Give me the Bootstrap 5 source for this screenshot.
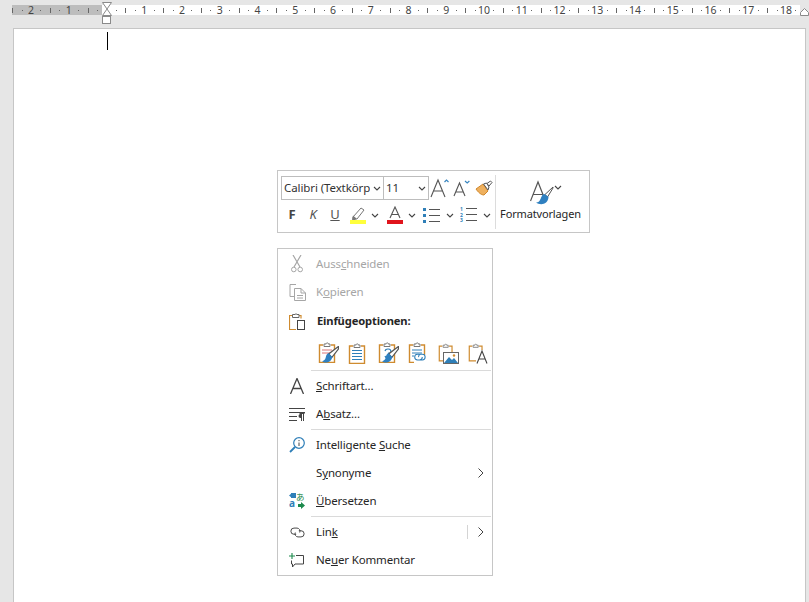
<!DOCTYPE html>
<html lang="de">
<head>
    <meta charset="UTF-8">
    <meta name="viewport" content="width=device-width, initial-scale=1.0">
    <title>Kontextmenü</title>
    <link href="https://cdn.jsdelivr.net/npm/bootstrap@5.3.0/dist/css/bootstrap.min.css" rel="stylesheet">
    <style>
        html, body { height: 100%; overflow: hidden; }
        body { background: #e6e6e6; font-family: "Noto Sans", "Liberation Sans", sans-serif; font-size: 11.5px; letter-spacing: -.15px; color: #262626; }
        .ruler-wrap { height: 28px; position: relative; }
        .ruler-svg { position: absolute; left: 0; top: 0; letter-spacing: 0; }
        .doc-page { position: absolute; left: 13px; top: 28px; width: 793px; height: 600px; background: #fff; border: 1px solid #c6c6c6; }
        .text-cursor { width: 1px; height: 18px; background: #000; margin: 3px 0 0 93px; }
        .mini-bar { position: absolute; left: 277px; top: 170px; width: 313px; height: 63px; background: #fff; border: 1px solid #c6c6c6; padding: 5px 3px 4px; }
        .bar-col { width: 214px; flex: 0 0 214px; }
        .combo { height: 24px; border: 1px solid #bdbdbd; padding-left: 2px; line-height: 21px; overflow: hidden; white-space: nowrap; color: #333; flex: 0 0 auto; font-size: 11.5px; letter-spacing: -.1px; }
        .combo-font { width: 103px; }
        .combo-size { width: 46px; margin-left: -1px; }
        .combo-clip { overflow: hidden; flex: 1 1 auto; }
        .bar-row2 { height: 28px; margin-top: 1px; }
        .cell { display: flex; align-items: center; justify-content: center; flex: 0 0 auto; }
        .bar-sep { width: 1px; height: 54px; background: #dcdcdc; margin: -1px 0 0 0; }
        .style-col { width: 92px; line-height: 14px; }
        .style-icon { height: 30px; align-self: flex-start; margin-left: 34px; }
        .style-label { font-size: 11px; margin: 1px 1px 0 0; color: #262626; }
        .ctx-menu { position: absolute; left: 277px; top: 248px; width: 216px; height: 328px; background: #fff; border: 1px solid #c6c6c6; padding-top: 1px; }
        .ctx-row { height: 28px; display: flex; align-items: center; position: relative; }
        .ctx-ico { width: 38px; flex: 0 0 38px; display: flex; align-items: center; justify-content: center; }
        .ctx-off { color: #a6a6a6; }
        .ctx-headrow { margin-top: 1px; }
        .ctx-head { font-weight: 700; font-size: 11.2px; margin: 1px 0 0 1px; }
        .paste-row { height: 35px; display: flex; padding-left: 35px; align-items: center; }
        .paste-cell { width: 30px; flex: 0 0 30px; display: flex; justify-content: center; }
        .ctx-sep { height: 1px; background: #dadada; margin-left: 33px; margin-right: 1px; }
        .ctx-sep + .ctx-row { margin-top: 1px; }
        .sep-tight { margin-top: 1px; }
        .sub-arrow { position: absolute; right: 8px; top: 9px; }
        .sub-line { position: absolute; right: 24px; top: 7px; width: 1px; height: 14px; background: #d4d4d4; }
        u { text-underline-offset: 1px; }
        .ico-text { font-family: "Noto Sans", "Noto Sans CJK JP", sans-serif; letter-spacing: 0; }
    </style>
</head>
<body>
    <svg width="0" height="0" class="position-absolute">
        <symbol id="chev" viewBox="0 0 8 5"><path d="M1 1l3 3 3-3" fill="none" stroke="#444" stroke-width="1.100"/></symbol>
        <symbol id="clip" viewBox="0 0 20 22">
            <path d="M5 4H1.500v17.500h15V4H13" fill="#fff" stroke="#cf8b2f" stroke-width="1.400"/>
            <path d="M6 5.500V3h2.200a1 1 0 0 1 1.600-1 1 1 0 0 1 .4 1H12v2.500z" fill="#fff" stroke="#777" stroke-width="1"/>
        </symbol>
        <symbol id="brush" viewBox="0 0 14 14">
            <path d="M13.500.5L5.500 6.500 8 9.500l5.500-7z" fill="#fff" stroke="#555" stroke-width="1"/>
            <path d="M5.500 6C3 6.500 3.500 9.500 2.500 11 1.800 12 1 12.500 0 12.500c2.500 2 7.500 1.500 8.500-3.500z" fill="#2f80c0"/>
        </symbol>
    </svg>

    <div class="ruler-wrap">
        <svg class="ruler-svg" id="ruler" width="809" height="28" font-family="Noto Sans, sans-serif" font-size="10.500" fill="#444"></svg>
    </div>
    <div class="doc-page"><div class="text-cursor"></div></div>

    <div class="mini-bar d-flex">
        <div class="bar-col">
            <div class="d-flex align-items-center">
                <div class="combo combo-font d-flex">
                    <span class="combo-clip">Calibri (Textkörp</span>
                    <span class="cell" style="width:13px"><svg width="8" height="5"><use href="#chev"/></svg></span>
                </div>
                <div class="combo combo-size d-flex">
                    <span class="combo-clip">11</span>
                    <span class="cell" style="width:13px"><svg width="8" height="5"><use href="#chev"/></svg></span>
                </div>
                <div class="cell" style="width:22px">
                    <svg width="20" height="20" viewBox="0 0 20 20"><path d="M1 19L8 2l7 17M3.500 13h9" fill="none" stroke="#555" stroke-width="1.100"/><path d="M14.500 4l2-2 2 2" fill="none" stroke="#3a86c0" stroke-width="1.200"/></svg>
                </div>
                <div class="cell" style="width:22px">
                    <svg width="18" height="18" viewBox="0 0 18 18"><path d="M1 17L6.500 4 12 17M2.800 13h7.400" fill="none" stroke="#555" stroke-width="1.100"/><path d="M12 2l2.200 2 2.200-2" fill="none" stroke="#3a86c0" stroke-width="1.200"/></svg>
                </div>
                <div class="cell" style="width:22px">
                    <svg width="18" height="16" viewBox="0 0 18 16"><path d="M1 9l7-5 5 7-4 4C6 15 3 12 1 9z" fill="#eeb05e" stroke="#d0872c"/><path d="M8.500 4l3-1 2.500 4-1 3z" fill="#fff" stroke="#555"/><path d="M12 3.500L15.500 1l1.500 1.500-3 3.500z" fill="#fff" stroke="#555"/></svg>
                </div>
            </div>
            <div class="d-flex align-items-center bar-row2">
                <div class="cell fw-bold" style="width:22px;font-size:13px;color:#444">F</div>
                <div class="cell fst-italic" style="width:20px;font-size:13px;color:#555">K</div>
                <div class="cell" style="width:24px;font-size:13px;color:#555;text-decoration:underline">U</div>
                <div class="cell" style="width:22px">
                    <svg width="16" height="18" viewBox="0 0 16 18"><path d="M3 11L11 2l3 2-7 9H3z" fill="#fff" stroke="#777"/><path d="M3 9.500l3.500 3L5 14H2z" fill="#777"/><rect y="14" width="16" height="4" fill="#ffff3c"/></svg>
                </div>
                <div class="cell" style="width:12px"><svg width="8" height="5"><use href="#chev"/></svg></div>
                <div class="cell" style="width:27px">
                    <svg width="16" height="18" viewBox="0 0 16 18"><path d="M3 12L8 1l5 11M4.600 8.500h6.800" fill="none" stroke="#555" stroke-width="1.100"/><rect y="14" width="16" height="4" fill="#e0141c"/></svg>
                </div>
                <div class="cell" style="width:8px"><svg width="8" height="5"><use href="#chev"/></svg></div>
                <div class="cell" style="width:30px">
                    <svg width="17" height="17" viewBox="0 0 17 17"><g fill="#2f7fb8"><rect y="1" width="3" height="3"/><rect y="7" width="3" height="3"/><rect y="13" width="3" height="3"/></g><path d="M6 2.500h11M6 8.500h11M6 14.500h11" stroke="#555"/></svg>
                </div>
                <div class="cell" style="width:8px"><svg width="8" height="5"><use href="#chev"/></svg></div>
                <div class="cell" style="width:29px">
                    <svg width="17" height="18" viewBox="0 0 17 18"><g class="ico-text" font-size="5" font-weight="700" fill="#2f7fb8"><text x="0" y="5">1</text><text x="0" y="10.500">2</text><text x="0" y="16">3</text></g><path d="M6 2.500h11M6 8.500h11M6 14.500h11" stroke="#555"/></svg>
                </div>
                <div class="cell" style="width:8px"><svg width="8" height="5"><use href="#chev"/></svg></div>
            </div>
        </div>
        <div class="bar-sep"></div>
        <div class="style-col d-flex flex-column align-items-center">
            <div class="d-flex align-items-end style-icon">
                <svg width="24" height="26" viewBox="0 0 24 26"><path d="M.5 21L8 2l7.500 19M3 14.500h10" fill="none" stroke="#555" stroke-width="1.200"/><path d="M23 7l-8 7.500 2.500 2.500 5.500-9z" fill="#fff" stroke="#555"/><path d="M14.500 14c-3.500.5-3 5-5.500 7.500-1 .8-2 1-3 1 4 3 12 2.500 12.500-5.500z" fill="#2f80c0"/></svg>
                <svg class="mb-3" width="8" height="5"><use href="#chev"/></svg>
            </div>
            <div class="style-label">Formatvorlagen</div>
        </div>
    </div>

    <div class="ctx-menu">
        <div class="ctx-row ctx-off">
            <div class="ctx-ico"><svg width="12" height="18" viewBox="0 0 12 18"><path d="M2 0l7 12M10 0L3 12" fill="none" stroke="#a6a6a6" stroke-width="1.200"/><circle cx="2.800" cy="14.500" r="2.300" fill="none" stroke="#a6a6a6"/><circle cx="9.200" cy="14.500" r="2.300" fill="none" stroke="#a6a6a6"/></svg></div>
            <span>Auss<u>c</u>hneiden</span>
        </div>
        <div class="ctx-row ctx-off">
            <div class="ctx-ico"><svg width="17" height="17" viewBox="0 0 17 17"><path d="M7 .5H1v12h4" fill="none" stroke="#a6a6a6"/><path d="M5.500 4.500H12L16.500 9v7.500h-11z" fill="#fff" stroke="#a6a6a6"/><path d="M12 4.500V9h4.500M8 11.500h6M8 14h6" fill="none" stroke="#a6a6a6"/></svg></div>
            <span>K<u>o</u>pieren</span>
        </div>
        <div class="ctx-row ctx-headrow">
            <div class="ctx-ico"><svg width="16" height="17" viewBox="0 0 16 17"><path d="M4 2.500H.5v14H7" fill="none" stroke="#cf8b2f" stroke-width="1.200"/><path d="M10 2.500h2v3" fill="none" stroke="#cf8b2f" stroke-width="1.200"/><path d="M3.500 4.500v-3H6a1.200 1.200 0 0 1 2 0h2v3z" fill="#fff" stroke="#666"/><rect x="8.500" y="7.500" width="7" height="9" fill="#fff" stroke="#444"/></svg></div>
            <span class="ctx-head">Einfügeoptionen:</span>
        </div>
        <div class="paste-row">
            <div class="paste-cell">
                <svg width="21" height="23" viewBox="0 0 21 23"><use href="#clip" width="20" height="22"/><path d="M4 9h10M4 12h8" stroke="#d77" /><use href="#brush" x="4" y="5" width="17" height="17"/></svg>
            </div>
            <div class="paste-cell">
                <svg width="20" height="22" viewBox="0 0 20 22"><use href="#clip" width="20" height="22"/><path d="M4 8.500h10M4 11.500h10M4 14.500h10M4 17.500h10" stroke="#2f7fb8"/></svg>
            </div>
            <div class="paste-cell">
                <svg width="21" height="23" viewBox="0 0 21 23"><use href="#clip" width="20" height="22"/><path d="M7 10a3 2.500 0 1 1 3 3M10 12a3 2.500 0 1 1-3 3" fill="none" stroke="#2f7fb8" stroke-width="1.200"/><use href="#brush" x="4" y="5" width="17" height="17"/></svg>
            </div>
            <div class="paste-cell">
                <svg width="21" height="23" viewBox="0 0 21 23"><use href="#clip" width="20" height="22"/><path d="M4 9h10M4 12h10M4 15h4" stroke="#2f7fb8"/><rect x="6" y="14" width="15" height="9" fill="#fff"/><path d="M11 15h-2a3 3 0 0 0 0 6h2a3 3 0 0 0 3-3M12 21h2a3 3 0 0 0 3-3 3 3 0 0 0-3-3h-2a3 3 0 0 0-2 3" fill="none" stroke="#2f7fb8" stroke-width="1.100" transform="translate(1 -1) scale(.95)"/></svg>
            </div>
            <div class="paste-cell">
                <svg width="21" height="23" viewBox="0 0 21 23"><use href="#clip" width="17" height="22"/><rect x="5.500" y="11.500" width="15" height="11" fill="#fff" stroke="#666"/><path d="M6 22l5-6 3 3 2-2 4 5z" fill="#2f7fb8"/><circle cx="16" cy="14.500" r="1.200" fill="#cf8b2f"/></svg>
            </div>
            <div class="paste-cell">
                <svg width="21" height="23" viewBox="0 0 21 23"><use href="#clip" width="17" height="22"/><rect x="8" y="9" width="13" height="14" fill="#fff"/><path d="M9 22.500L14 10l5 12.500M10.800 18h6.400" fill="none" stroke="#444" stroke-width="1.100"/></svg>
            </div>
        </div>
        <div class="ctx-sep"></div>
        <div class="ctx-row">
            <div class="ctx-ico"><svg width="14" height="16" viewBox="0 0 14 16"><path d="M.5 16L7 .5 13.500 16M2.800 10.500h8.400" fill="none" stroke="#444" stroke-width="1.300"/></svg></div>
            <span><u>S</u>chriftart...</span>
        </div>
        <div class="ctx-row">
            <div class="ctx-ico"><svg width="16" height="13" viewBox="0 0 16 13"><path d="M0 .5h16M0 4.500h16M0 8.500h8M0 12.500h8" stroke="#444"/><path d="M14.500 6v7M12.500 6v7" stroke="#444"/><path d="M12.500 6h-1a2 2 0 0 0 0 4h1z" fill="#444"/><path d="M10.500 5.500h5" stroke="#444"/></svg></div>
            <span>A<u>b</u>satz...</span>
        </div>
        <div class="ctx-sep sep-tight"></div>
        <div class="ctx-row">
            <div class="ctx-ico"><svg width="16" height="16" viewBox="0 0 16 16"><circle cx="10" cy="6" r="5.300" fill="#fff" stroke="#2f7fb8" stroke-width="1.200"/><path d="M6 10l-5 5" stroke="#2f7fb8" stroke-width="1.800"/><path d="M10 5.500v3.500M10 3v1.200" stroke="#444"/></svg></div>
            <span>Intelligente <u>S</u>uche</span>
        </div>
        <div class="ctx-row">
            <div class="ctx-ico"></div>
            <span>S<u>y</u>nonyme</span>
            <svg class="sub-arrow" width="6" height="10" viewBox="0 0 6 10"><path d="M.5.500L5 5 .5 9.500" fill="none" stroke="#444"/></svg>
        </div>
        <div class="ctx-row">
            <div class="ctx-ico"><svg width="16" height="18" viewBox="0 0 16 18"><rect x="2" y="1" width="5" height="5" fill="#2f7fb8"/><path d="M0 3.500L3 1v5z" fill="#2f7fb8"/><text class="ico-text" x="7" y="8" font-size="8.500" fill="#1c8a4c">あ</text><path d="M9 12h3v-2l4 3.500-4 3.500v-2H9z" fill="#1c8a4c"/><text class="ico-text" x="0" y="15" font-size="10" font-weight="700" fill="#2f7fb8">a</text></svg></div>
            <span><u>Ü</u>bersetzen</span>
        </div>
        <div class="ctx-sep sep-tight"></div>
        <div class="ctx-row">
            <div class="ctx-ico"><svg width="15" height="11" viewBox="0 0 17 12"><path d="M7 8H4.500a3.500 3.500 0 0 1 0-7H8a3.500 3.500 0 0 1 3 5" fill="none" stroke="#444" stroke-width="1.100"/><path d="M10 4h2.500a3.500 3.500 0 0 1 0 7H9a3.500 3.500 0 0 1-3-5" fill="none" stroke="#444" stroke-width="1.100"/></svg></div>
            <span>Lin<u>k</u></span>
            <span class="sub-line"></span>
            <svg class="sub-arrow" width="6" height="10" viewBox="0 0 6 10"><path d="M.5.500L5 5 .5 9.500" fill="none" stroke="#444"/></svg>
        </div>
        <div class="ctx-row">
            <div class="ctx-ico"><svg width="16" height="15" viewBox="0 0 16 15"><path d="M7 2.500h7.500v8.500H6L3.500 14v-3H2.500V7.500" fill="none" stroke="#444"/><path d="M3 0v6M0 3h6" stroke="#1c8a4c" stroke-width="1.100"/></svg></div>
            <span>Ne<u>u</u>er Kommentar</span>
        </div>
    </div>

    <script>
        // Lineal: 0 liegt bei x=106, ein Zentimeter sind 37.75px
        const svg = document.getElementById("ruler");
        const ns = "http://www.w3.org/2000/svg";
        const zero = 106.5, cm = 37.75;

        function add(tag, attrs, text) {
            const el = document.createElementNS(ns, tag);
            for (const k in attrs) el.setAttribute(k, attrs[k]);
            if (text) el.textContent = text;
            svg.appendChild(el);
        }

        add("rect", { x: 12, y: 5, width: 90, height: 10, fill: "#bdbdbd" });
        add("rect", { x: 102, y: 5, width: 698, height: 10, fill: "#fff" });

        for (let i = -3; i <= 18; i++) {
            const x = zero + i * cm;
            if (i !== 0 && i > -3) add("text", { x: x, y: 13.5, "text-anchor": "middle" }, String(Math.abs(i)));
            [0.25, 0.5, 0.75].forEach(function (f) {
                const px = Math.round(x + f * cm);
                if (px < 12 || px > 798 || (px > 100 && px < 113)) return;
                if (f === 0.5) add("rect", { x: px, y: 8, width: 1, height: 5, fill: "#666" });
                else add("rect", { x: px, y: 10, width: 1, height: 1, fill: "#666" });
            });
        }

        // Einzugsmarken
        add("path", { d: "M102.500 2.500h9L107 9z", fill: "#fff", stroke: "#8a8a8a" });
        add("path", { d: "M107 9l4.500 6.500h-9z", fill: "#fff", stroke: "#8a8a8a" });
        add("rect", { x: 102.5, y: 16.5, width: 8, height: 7, fill: "#fff", stroke: "#8a8a8a" });
        add("path", { d: "M800.500 15.500v-3l4-4 4 4v3z", fill: "#fff", stroke: "#8a8a8a" });
    </script>
    <script src="https://cdn.jsdelivr.net/npm/bootstrap@5.3.0/dist/js/bootstrap.bundle.min.js"></script>
</body>
</html>
